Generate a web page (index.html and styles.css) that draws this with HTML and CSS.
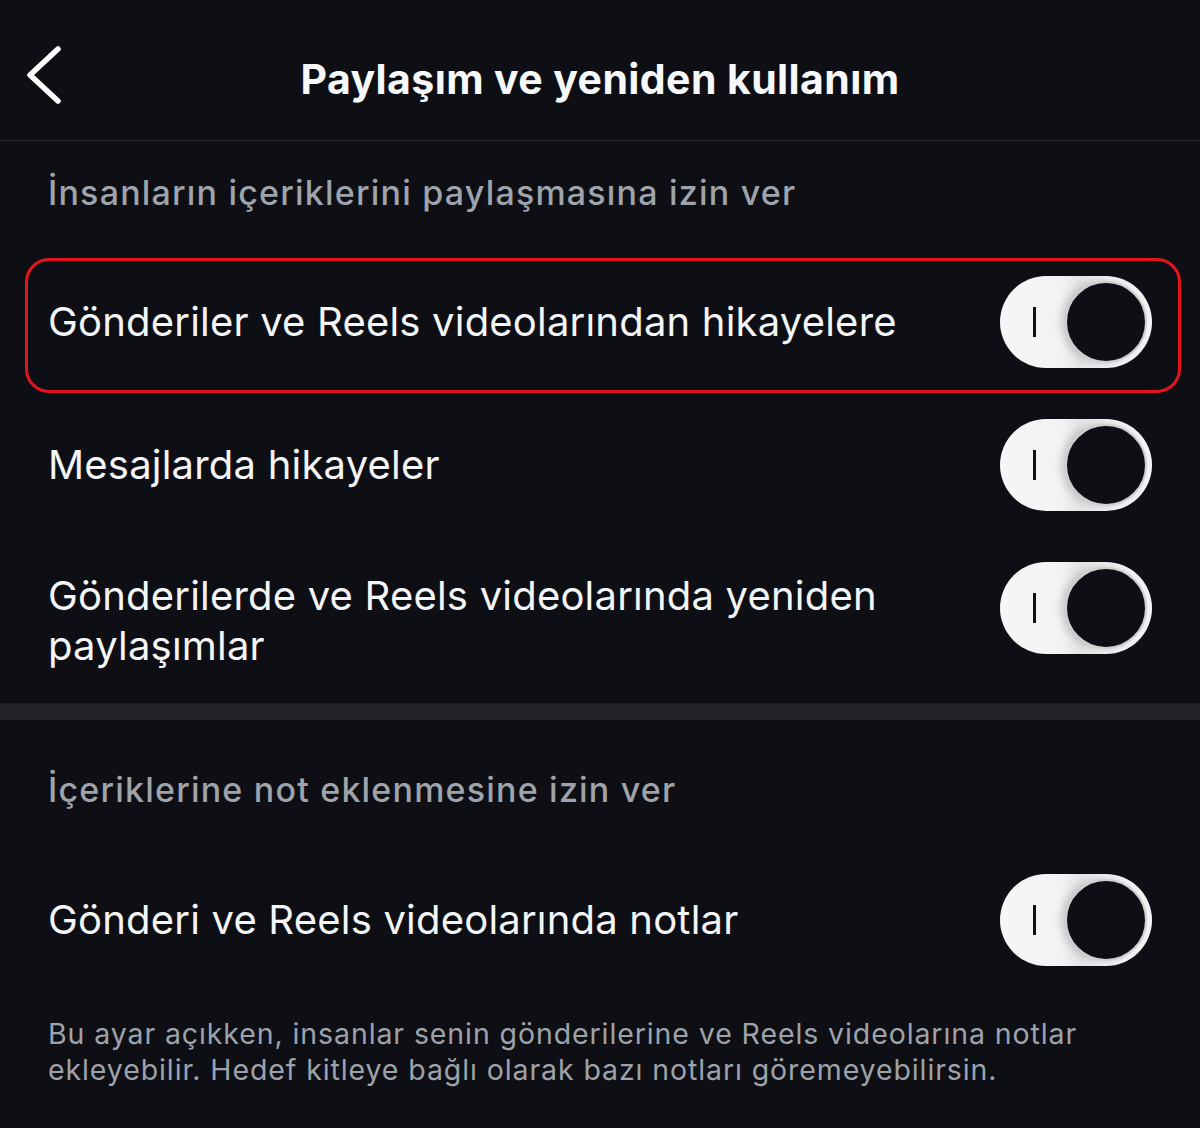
FILE: index.html
```html
<!DOCTYPE html>
<html lang="tr">
<head>
<meta charset="utf-8">
<title>Paylaşım ve yeniden kullanım</title>
<link rel="stylesheet" href="styles.css">
</head>
<body>
<div class="screen">
  <header class="topbar">
    <button class="back" aria-label="Geri">
      <svg width="40" height="64" viewBox="0 0 40 64"><polyline points="32,4 4,30 32,56" fill="none" stroke="#fff" stroke-width="5.5" stroke-linecap="round" stroke-linejoin="round"/></svg>
    </button>
    <h1 class="title">Paylaşım ve yeniden kullanım</h1>
  </header>

  <section class="group">
    <h2 class="group-title first">İnsanların içeriklerini paylaşmasına izin ver</h2>
    <div class="row highlighted">
      <span class="label">Gönderiler ve Reels videolarından hikayelere</span>
      <span class="toggle"><span class="mark"></span><span class="knob"></span></span>
    </div>
    <div class="row">
      <span class="label">Mesajlarda hikayeler</span>
      <span class="toggle"><span class="mark"></span><span class="knob"></span></span>
    </div>
    <div class="row tall">
      <span class="label">Gönderilerde ve Reels videolarında yeniden paylaşımlar</span>
      <span class="toggle"><span class="mark"></span><span class="knob"></span></span>
    </div>
  </section>

  <div class="divider"></div>

  <section class="group">
    <h2 class="group-title second">İçeriklerine not eklenmesine izin ver</h2>
    <div class="row">
      <span class="label">Gönderi ve Reels videolarında notlar</span>
      <span class="toggle"><span class="mark"></span><span class="knob"></span></span>
    </div>
    <p class="note">Bu ayar açıkken, insanlar senin gönderilerine ve Reels videolarına notlar ekleyebilir. Hedef kitleye bağlı olarak bazı notları göremeyebilirsin.</p>
  </section>
</div>
</body>
</html>
```

FILE: styles.css
```css
* { box-sizing: border-box; }
html, body {
  margin: 0;
  padding: 0;
  background: #0d0f14;
}
body {
  font-family: Inter, "Noto Sans", "Liberation Sans", sans-serif;
  color: #f4f5f7;
}
.screen {
  width: 1200px;
  min-height: 1128px;
  background: #0d0f14;
}
.topbar {
  height: 141px;
  border-bottom: 1px solid #25272d;
  display: flex;
  align-items: center;
  justify-content: center;
  position: relative;
  padding-top: 17px;
}
.back {
  position: absolute;
  left: 26px;
  top: 45px;
  background: none;
  border: 0;
  padding: 0;
  width: 40px;
  height: 64px;
}
.back svg { display: block; }
.title {
  margin: 0;
  font-size: 41px;
  line-height: 50px;
  font-weight: 700;
  color: #f7f8fa;
  letter-spacing: 0.4px;
}
.group-title {
  margin: 0;
  padding: 0 48px;
  font-size: 34px;
  line-height: 40px;
  font-weight: 500;
  color: #9fa3ab;
  letter-spacing: 1.2px;
}
.group-title.first { padding-top: 32px; padding-bottom: 37px; }
.group-title.second { padding-top: 50px; padding-bottom: 38px; }
.row {
  height: 143px;
  padding: 0 48px;
  display: flex;
  align-items: center;
  justify-content: space-between;
  gap: 40px;
  position: relative;
}
.row.tall {
  height: 167px;
  align-items: flex-start;
  padding-top: 26px;
}
.row.tall .label {
  margin-top: 9px;
  max-width: 880px;
}
.label {
  font-size: 40px;
  line-height: 50px;
  font-weight: 400;
  color: #f4f5f7;
  letter-spacing: 0.2px;
}
.highlighted::after {
  content: "";
  position: absolute;
  left: 25px;
  right: 19px;
  top: 8px;
  bottom: 0;
  border: 3px solid #e3141b;
  border-radius: 24px;
  pointer-events: none;
}
.toggle {
  flex: none;
  width: 152px;
  height: 92px;
  border-radius: 46px;
  background: linear-gradient(90deg, #f6f6f7 0%, #f3f3f4 40%, #e4e4e6 52%, #f2f2f3 70%, #f5f5f6 100%);
  position: relative;
  display: block;
}
.mark {
  position: absolute;
  left: 33px;
  top: 31px;
  width: 3px;
  height: 30px;
  background: #111;
}
.knob {
  position: absolute;
  right: 5px;
  top: 5px;
  width: 82px;
  height: 82px;
  border-radius: 50%;
  background: #0d0f14;
  border: 2px solid #cfcfd2;
  box-shadow: -4px 0 8px rgba(0,0,0,0.18);
}
.divider {
  height: 17px;
  background: #222328;
  border-top: 1px solid #1a1b1f;
}
.note {
  margin: 0;
  padding: 25px 48px 0;
  font-size: 28.5px;
  line-height: 36px;
  color: #9ea2aa;
  letter-spacing: 0.9px;
}
```
